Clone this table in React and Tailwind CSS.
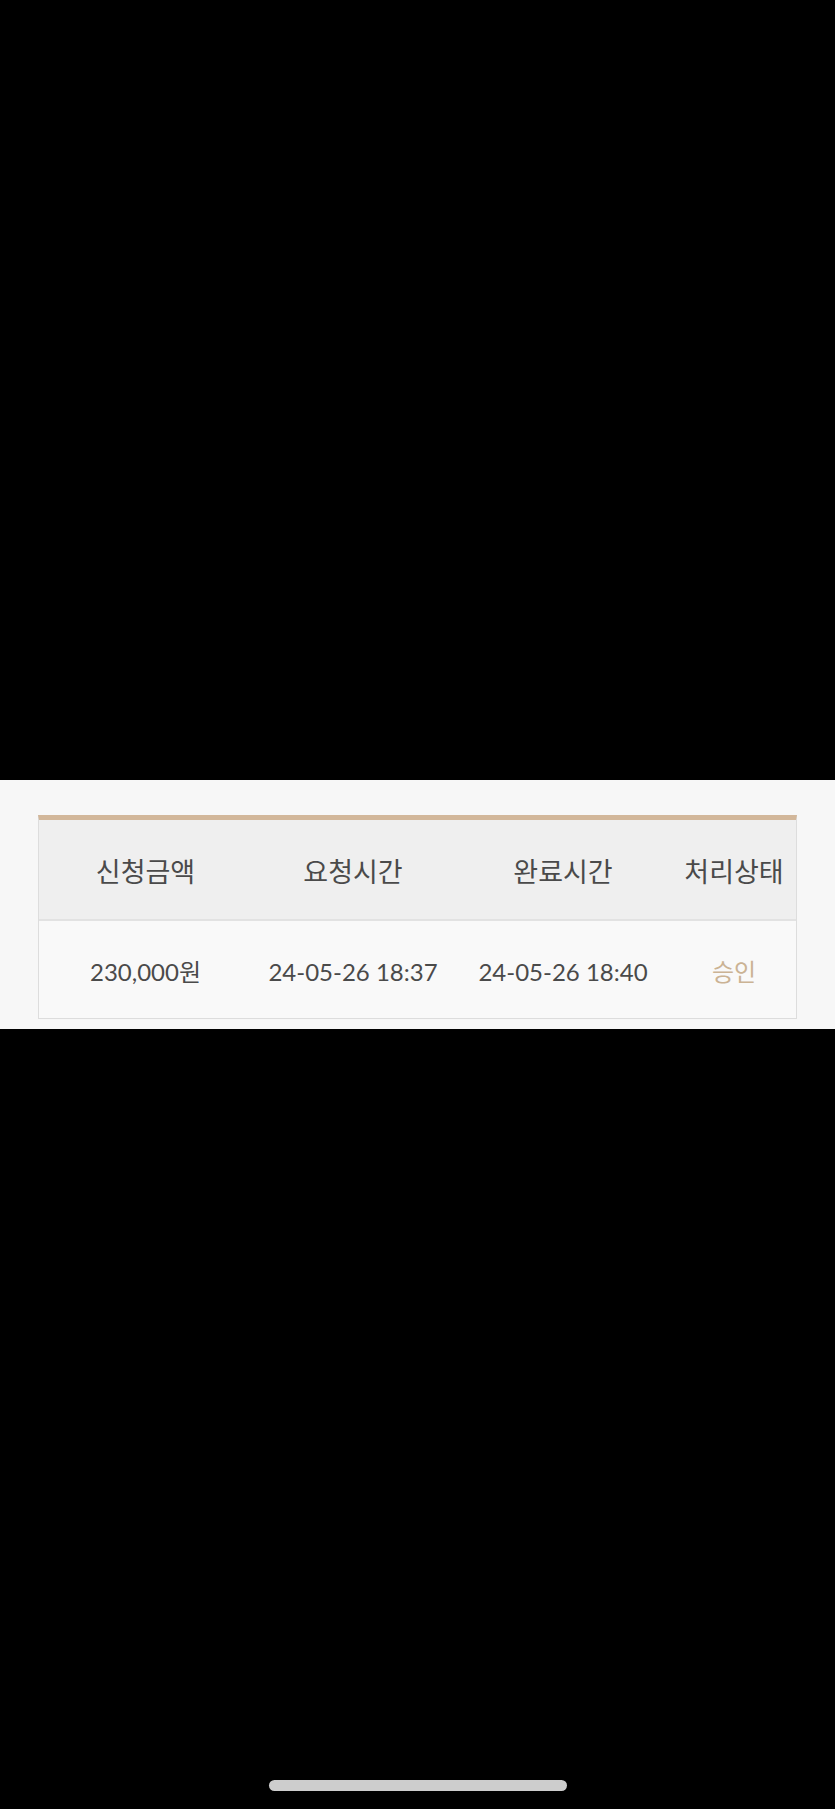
export default function App() {
  const font = { fontFamily: 'Lato, "Noto Sans CJK KR", sans-serif' };
  return (
    <div className="w-[835px] h-[1809px] bg-black flex flex-col" style={font}>
      <div className="h-[780px] shrink-0" />
      <div className="bg-[#f7f7f7] h-[249px] shrink-0 pt-[35px] px-[38px]">
        <div className="border-t-[5px] border-t-[#d2b79a] border-x border-b border-[#dddddd]">
          <div className="grid grid-cols-[213px_202px_218px_1fr] h-[101px] pt-[6px] items-center bg-[#efefef] border-b-2 border-[#e2e2e2] text-[27px] text-[#4a4a4a]">
            <div className="text-center">신청금액</div>
            <div className="text-center">요청시간</div>
            <div className="text-center">완료시간</div>
            <div className="text-center">처리상태</div>
          </div>
          <div className="grid grid-cols-[213px_202px_218px_1fr] h-[97px] pt-[4px] items-center bg-[#f9f9f9] text-[24px] text-[#4a4a4a]">
            <div className="text-center">230,000원</div>
            <div className="text-center">24-05-26 18:37</div>
            <div className="text-center">24-05-26 18:40</div>
            <div className="text-center text-[#cbb394]">승인</div>
          </div>
        </div>
      </div>
      <div className="flex-1 flex items-end justify-center pb-[18px]">
        <div className="w-[298px] h-[11px] rounded-full bg-[#cdcdcd]" />
      </div>
    </div>
  );
}
